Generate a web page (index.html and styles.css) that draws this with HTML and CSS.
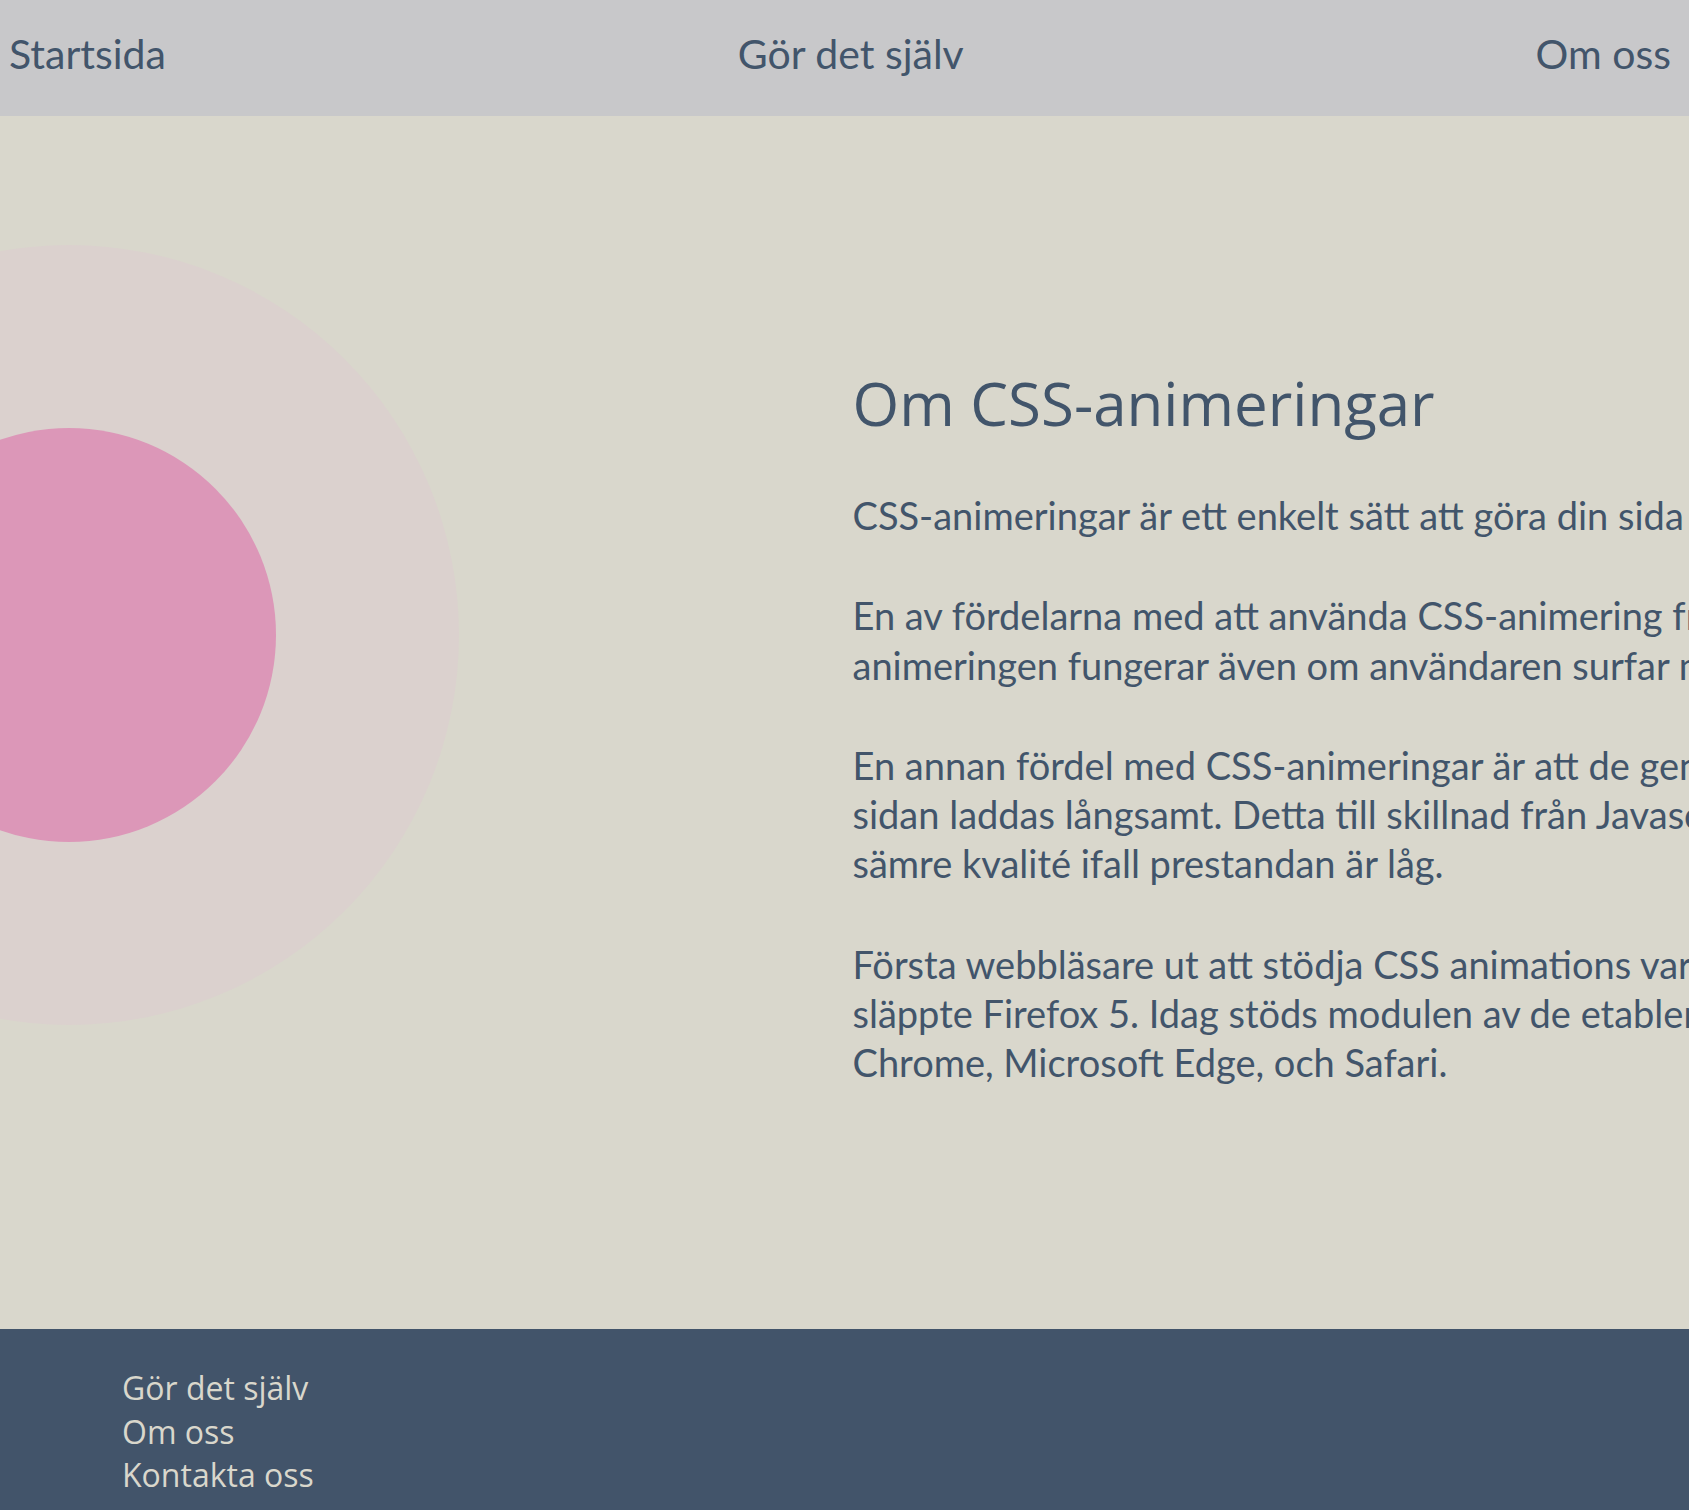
FILE: index.html
```html
<!DOCTYPE html>
<html lang="sv">
<head>
<meta charset="utf-8">
<title>Om CSS-animeringar</title>
<link rel="stylesheet" href="styles.css">
</head>
<body>
<header class="site-header">
  <nav class="top-nav">
    <a class="top-link" href="#">Startsida</a>
    <a class="top-link" href="#">Gör det själv</a>
    <a class="top-link" href="#">Om oss</a>
  </nav>
</header>
<main class="hero">
  <div class="art">
    <div class="ring-outer">
      <div class="ring-inner"></div>
    </div>
  </div>
  <section class="copy">
    <h1 class="title">Om CSS-animeringar</h1>
    <p class="para">CSS-animeringar är ett enkelt sätt att göra din sida mer levande och intressant.</p>
    <p class="para">En av fördelarna med att använda CSS-animering framför JavaScript är att<br>animeringen fungerar även om användaren surfar med JavaScript avstängt.</p>
    <p class="para">En annan fördel med CSS-animeringar är att de generellt flyter på bra även om<br>sidan laddas långsamt. Detta till skillnad från Javascript-animeringar som kan få<br>sämre kvalité ifall prestandan är låg.</p>
    <p class="para">Första webbläsare ut att stödja CSS animations var Firefox, när Mozilla<br>släppte Firefox 5. Idag stöds modulen av de etablerade webbläsarna Firefox,<br>Chrome, Microsoft Edge, och Safari.</p>
  </section>
</main>
<footer class="site-footer">
  <nav class="foot-nav">
    <a class="foot-link" href="#">Gör det själv</a>
    <a class="foot-link" href="#">Om oss</a>
    <a class="foot-link" href="#">Kontakta oss</a>
  </nav>
</footer>
</body>
</html>
```

FILE: styles.css
```css
html, body {
  margin: 0;
  padding: 0;
}
body {
  background: #d9d7cc;
  color: #42556b;
  font-family: Lato, "Open Sans", sans-serif;
  overflow-x: hidden;
}
a {
  text-decoration: none;
  color: inherit;
}

.site-header {
  background: #c8c8ca;
  height: 116px;
  box-sizing: border-box;
  padding: 30px 18px 0 9px;
}
.top-nav {
  display: flex;
  justify-content: space-between;
  align-items: flex-start;
}
.top-link {
  font-size: 41px;
  line-height: 48px;
  color: #42556b;
}

.hero {
  display: grid;
  grid-template-columns: minmax(0, 1fr) minmax(0, 1fr);
  height: 1213px;
  overflow: hidden;
}
.art {
  padding-top: 129px;
  min-width: 0;
}
.ring-outer {
  width: 780px;
  height: 780px;
  margin-left: -321px;
  border-radius: 50%;
  background: #dbd1ce;
  display: grid;
  place-items: center;
}
.ring-inner {
  width: 414px;
  height: 414px;
  border-radius: 50%;
  background: #dc97b8;
}

.copy {
  min-width: 0;
  padding: 246px 0 0 8px;
  white-space: nowrap;
}
.title {
  margin: 0 0 47px;
  font-family: "Open Sans", sans-serif;
  font-weight: 400;
  font-size: 60px;
  line-height: normal;
  color: #42556b;
}
.para {
  margin: 0 0 51px;
  font-size: 38px;
  line-height: 49.3px;
}

.site-footer {
  background: #42546a;
  padding: 37px 0 40px 122px;
}
.foot-nav {
  display: flex;
  flex-direction: column;
  align-items: flex-start;
}
.foot-link {
  font-family: "Open Sans", sans-serif;
  font-size: 32px;
  line-height: 43.5px;
  color: #d9d7cc;
}
```
